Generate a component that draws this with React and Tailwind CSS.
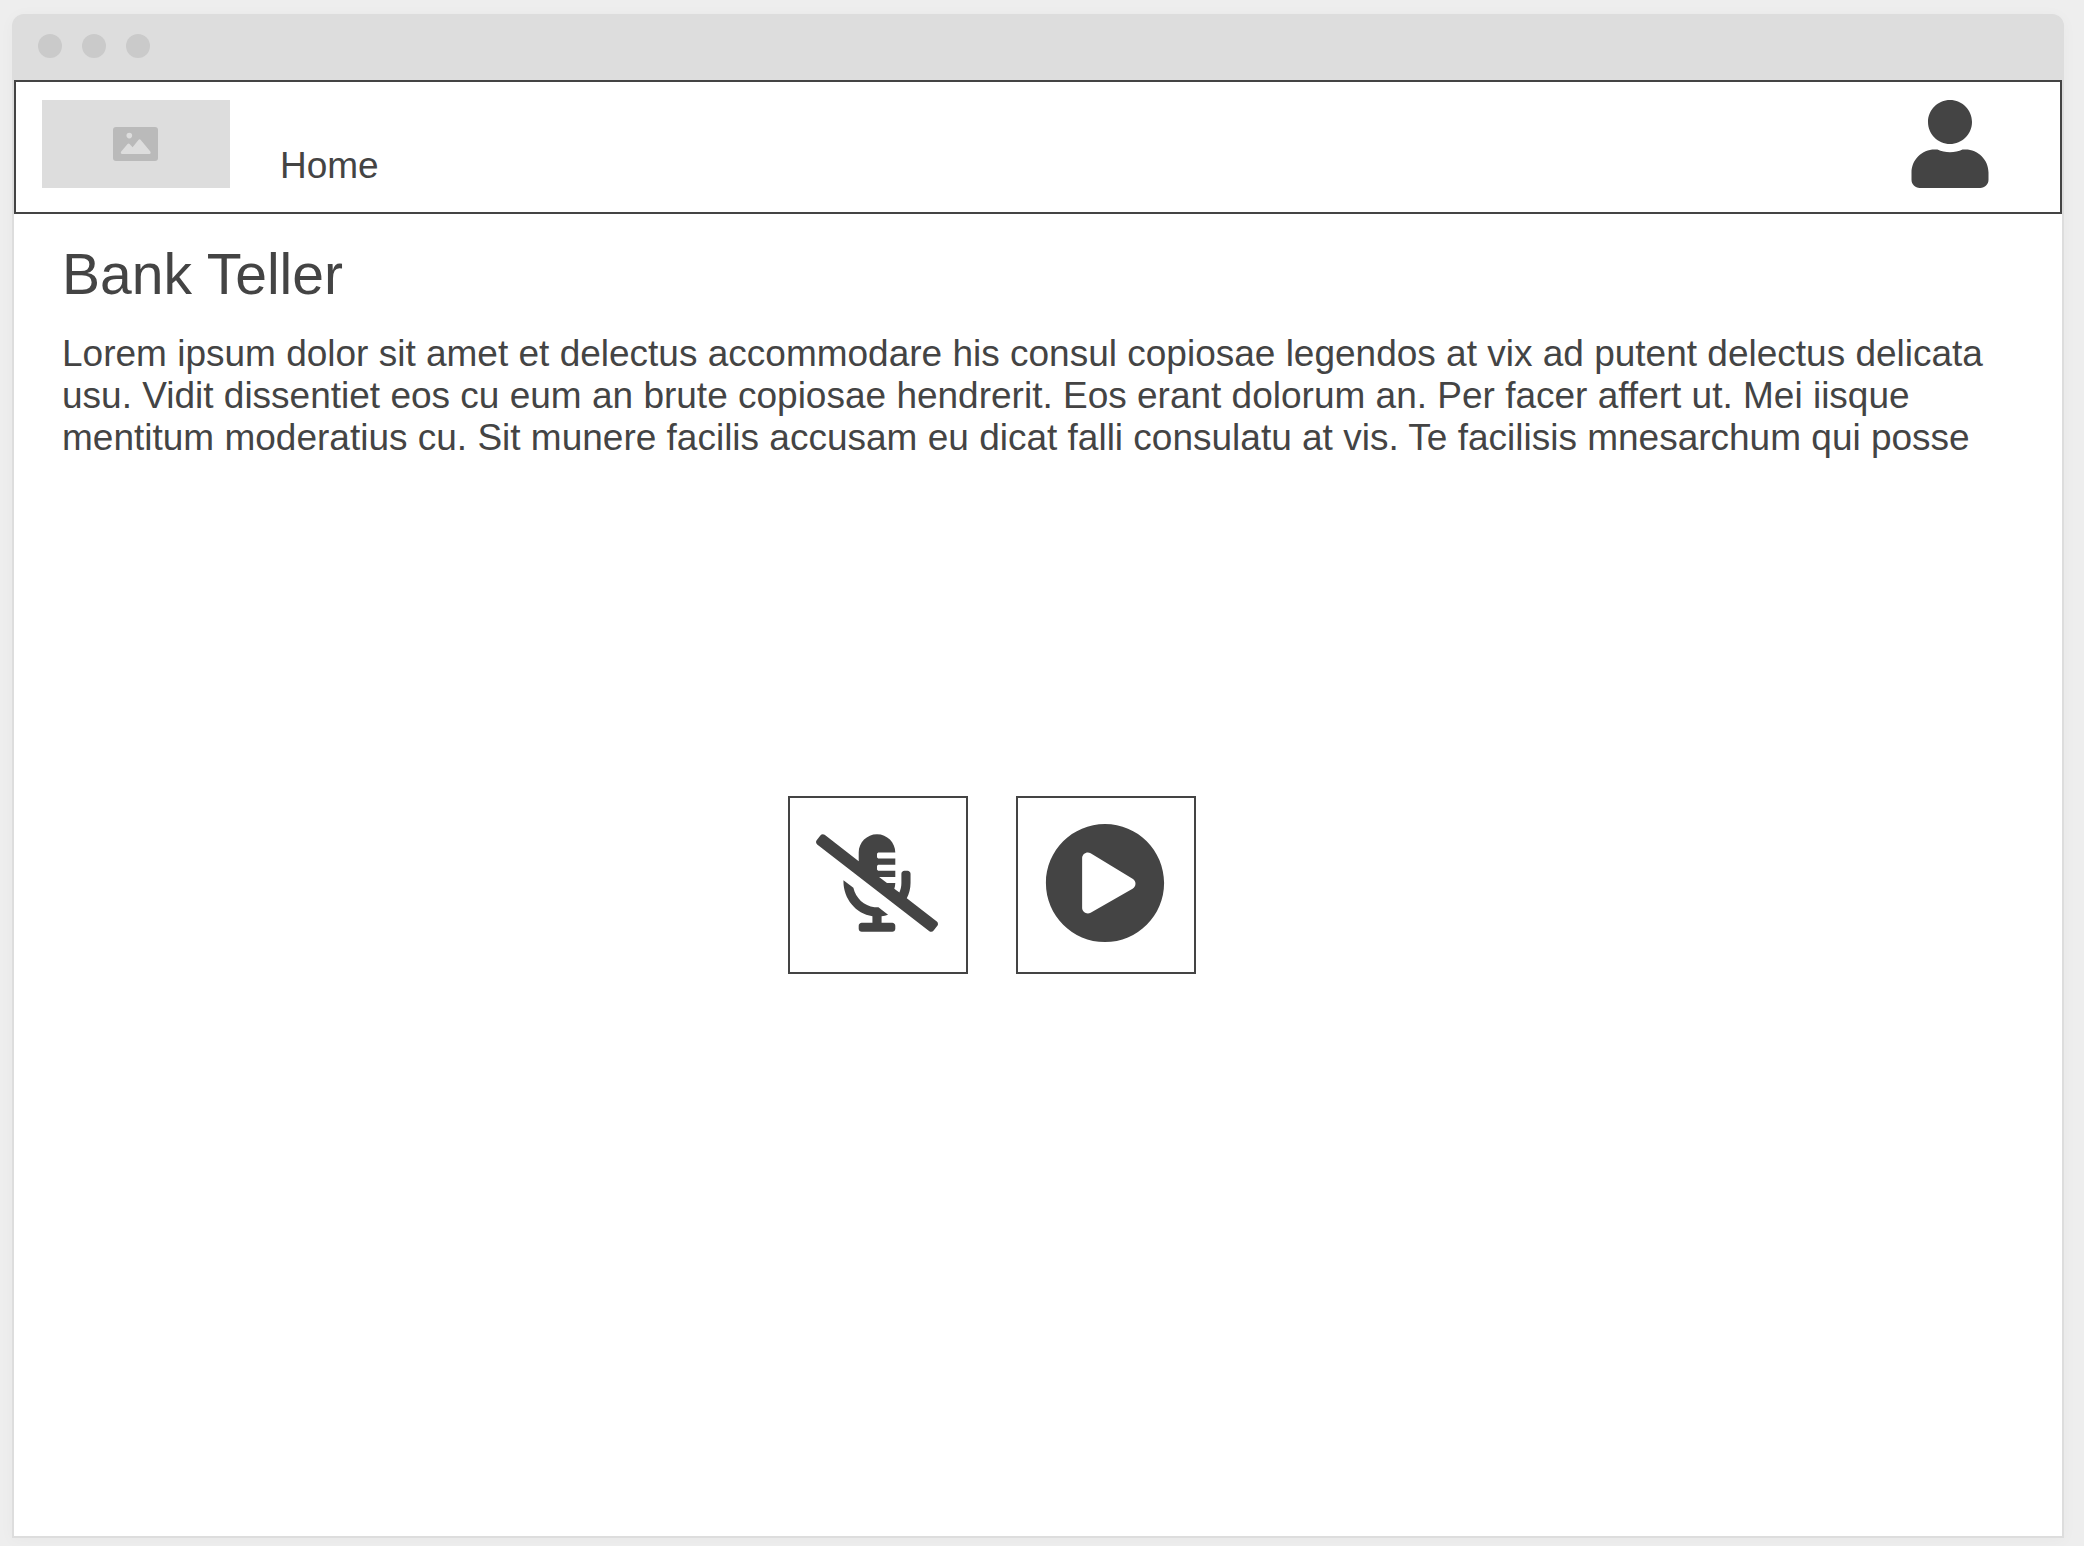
import { FaMicrophoneAltSlash, FaPlayCircle, FaUser } from "react-icons/fa";

function TitleBar() {
  return (
    <div className="flex h-16 items-center gap-5 px-6 pb-1">
      <span className="size-6 rounded-full bg-[#cacaca]" />
      <span className="size-6 rounded-full bg-[#cacaca]" />
      <span className="size-6 rounded-full bg-[#cacaca]" />
    </div>
  );
}

function PictureIcon() {
  return (
    <svg viewBox="0 0 46 34" className="h-[34px] w-[46px]" aria-hidden="true">
      <rect width="45" height="34" rx="3" fill="#bababa" />
      <circle cx="16.3" cy="8.6" r="2.8" fill="#dddddd" />
      <path
        d="M8.2 24.6 14.6 17Q15.6 15.8 16.6 17L19.6 20.2 25.4 13Q26.6 11.6 27.8 13L37.3 24.6Q38.3 27 36.4 27H9.2Q7 27 8.2 24.6Z"
        fill="#dddddd"
      />
    </svg>
  );
}

function Header() {
  return (
    <header className="flex items-start border-2 border-[#444444] bg-white pt-[18px] pr-[71px] pb-6 pl-[26px]">
      <div className="flex h-[88px] w-[188px] items-center justify-center bg-[#dddddd]">
        <PictureIcon />
      </div>
      <nav className="flex h-[88px] items-end pb-px pl-[50px]">
        <a href="#home" className="text-[37px] leading-[42px]">
          Home
        </a>
      </nav>
      <button type="button" aria-label="Account" className="ml-auto">
        <FaUser className="h-[88px] w-[78px]" />
      </button>
    </header>
  );
}

function ControlButton({ label, children }) {
  return (
    <button
      type="button"
      aria-label={label}
      className="flex h-[178px] w-[180px] items-center justify-center border-2 border-[#444444] pr-0.5 pb-1"
    >
      {children}
    </button>
  );
}

export default function App() {
  return (
    <div className="flex min-h-screen flex-col bg-[#eeeeee] pt-3.5 pr-5 pb-2 pl-3 font-['Liberation_Sans',Arial,sans-serif] text-[#444444]">
      <div className="flex grow flex-col rounded-t-xl border-2 border-[#dddddd] bg-[#dddddd] shadow-[0_2px_16px_rgba(0,0,0,0.03)]">
        <TitleBar />
        <div className="flex grow flex-col bg-white">
          <Header />
          <main className="px-12 pt-7">
            <h1 className="text-[57px] leading-[64px]">Bank Teller</h1>
            <p className="mt-[27px] pr-4 text-[37px] leading-[42px]">
              Lorem ipsum dolor sit amet et delectus accommodare his consul copiosae legendos at vix
              ad putent delectus delicata usu. Vidit dissentiet eos cu eum an brute copiosae
              hendrerit. Eos erant dolorum an. Per facer affert ut. Mei iisque mentitum moderatius
              cu. Sit munere facilis accusam eu dicat falli consulatu at vis. Te facilisis
              mnesarchum qui posse
            </p>
            <div className="mt-[337px] flex justify-center gap-12 pr-23">
              <ControlButton label="Unmute microphone">
                <FaMicrophoneAltSlash className="h-[98px] w-[122px]" />
              </ControlButton>
              <ControlButton label="Play">
                <FaPlayCircle className="size-[122px]" />
              </ControlButton>
            </div>
          </main>
        </div>
      </div>
    </div>
  );
}
